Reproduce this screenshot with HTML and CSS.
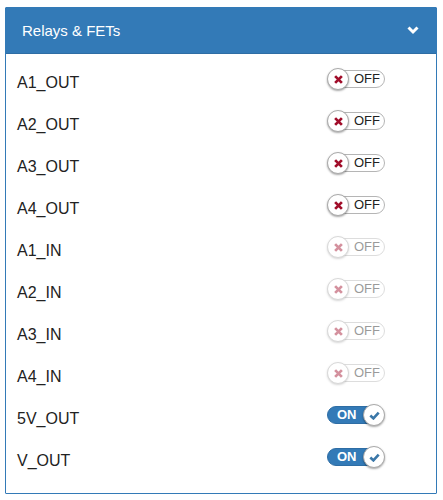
FILE: index.html
```html
<!DOCTYPE html>
<html>
<head>
<meta charset="utf-8">
<link rel="stylesheet" href="styles.css">
</head>
<body>
<div class="panel">
  <div class="panel-heading">
    <span class="title">Relays &amp; FETs</span>
    <svg class="chevron" width="12" height="10" viewBox="0 0 12 10"><path d="M1.5 2.5 L6 7 L10.5 2.5" fill="none" stroke="#fff" stroke-width="3"/></svg>
  </div>
  <div class="panel-body">
    <div class="row"><span class="label">A1_OUT</span><span class="toggle off"><span class="track">OFF</span><span class="knob"><svg width="9" height="9" viewBox="0 0 8 8"><path d="M1 1 L7 7 M7 1 L1 7" stroke="#a10d2a" stroke-width="2.4"/></svg></span></span></div>
    <div class="row"><span class="label">A2_OUT</span><span class="toggle off"><span class="track">OFF</span><span class="knob"><svg width="9" height="9" viewBox="0 0 8 8"><path d="M1 1 L7 7 M7 1 L1 7" stroke="#a10d2a" stroke-width="2.4"/></svg></span></span></div>
    <div class="row"><span class="label">A3_OUT</span><span class="toggle off"><span class="track">OFF</span><span class="knob"><svg width="9" height="9" viewBox="0 0 8 8"><path d="M1 1 L7 7 M7 1 L1 7" stroke="#a10d2a" stroke-width="2.4"/></svg></span></span></div>
    <div class="row"><span class="label">A4_OUT</span><span class="toggle off"><span class="track">OFF</span><span class="knob"><svg width="9" height="9" viewBox="0 0 8 8"><path d="M1 1 L7 7 M7 1 L1 7" stroke="#a10d2a" stroke-width="2.4"/></svg></span></span></div>
    <div class="row"><span class="label">A1_IN</span><span class="toggle off disabled"><span class="track">OFF</span><span class="knob"><svg width="9" height="9" viewBox="0 0 8 8"><path d="M1 1 L7 7 M7 1 L1 7" stroke="#a10d2a" stroke-width="2.4"/></svg></span></span></div>
    <div class="row"><span class="label">A2_IN</span><span class="toggle off disabled"><span class="track">OFF</span><span class="knob"><svg width="9" height="9" viewBox="0 0 8 8"><path d="M1 1 L7 7 M7 1 L1 7" stroke="#a10d2a" stroke-width="2.4"/></svg></span></span></div>
    <div class="row"><span class="label">A3_IN</span><span class="toggle off disabled"><span class="track">OFF</span><span class="knob"><svg width="9" height="9" viewBox="0 0 8 8"><path d="M1 1 L7 7 M7 1 L1 7" stroke="#a10d2a" stroke-width="2.4"/></svg></span></span></div>
    <div class="row"><span class="label">A4_IN</span><span class="toggle off disabled"><span class="track">OFF</span><span class="knob"><svg width="9" height="9" viewBox="0 0 8 8"><path d="M1 1 L7 7 M7 1 L1 7" stroke="#a10d2a" stroke-width="2.4"/></svg></span></span></div>
    <div class="row"><span class="label">5V_OUT</span><span class="toggle on"><span class="track">ON</span><span class="knob"><svg width="11" height="9" viewBox="0 0 10 8"><path d="M1.2 4 L4 6.6 L8.8 1.4" fill="none" stroke="#3a77a8" stroke-width="2.4"/></svg></span></span></div>
    <div class="row"><span class="label">V_OUT</span><span class="toggle on"><span class="track">ON</span><span class="knob"><svg width="11" height="9" viewBox="0 0 10 8"><path d="M1.2 4 L4 6.6 L8.8 1.4" fill="none" stroke="#3a77a8" stroke-width="2.4"/></svg></span></span></div>
  </div>
</div>
</body>
</html>
```
FILE: styles.css
```css
* { box-sizing: border-box; }
body {
  margin: 0;
  padding: 7px 7px 0 5px;
  font-family: "Liberation Sans", Arial, sans-serif;
  background: #fff;
  color: #222;
}
.panel {
  width: 432px;
  border: 1px solid #337ab7;
  border-radius: 1px;
}
.panel-heading {
  height: 46px;
  background: #337ab7;
  color: #fff;
  display: flex;
  align-items: center;
  justify-content: space-between;
  padding: 0 17px 0 16px;
  border-bottom: 1px solid #2e6da4;
}
.title {
  font-size: 15px;
  margin-top: -1px;
}
.chevron { margin-top: -2px; }
.panel-body {
  padding: 8px 51px 11px 11px;
}
.row {
  height: 42px;
  display: flex;
  align-items: center;
  justify-content: space-between;
}
.label {
  font-size: 16px;
  color: #222;
}
.toggle {
  position: relative;
  width: 58px;
  height: 22px;
  margin-bottom: 8px;
}
.track {
  position: absolute;
  top: 2px;
  left: 0;
  right: 0;
  height: 18px;
  border-radius: 9px;
  font-size: 13px;
  line-height: 16px;
}
.off .track {
  left: 6px;
  background: #fff;
  border: 1px solid #b5b5b5;
  color: #222;
  padding-left: 20px;
}
.on .track {
  right: 8px;
  background: #337ab7;
  border: 1px solid #2e6da4;
  color: #fff;
  font-weight: bold;
  padding-left: 9px;
  line-height: 15px;
}
.knob {
  position: absolute;
  top: 0;
  width: 22px;
  height: 22px;
  border-radius: 50%;
  background: #fff;
  border: 1px solid #aaa;
  box-shadow: 0 1px 2px rgba(0,0,0,0.35);
  display: flex;
  align-items: center;
  justify-content: center;
}
.off .knob { left: 0; }
.on .knob { right: 0; }
.disabled { opacity: 0.45; }
```
